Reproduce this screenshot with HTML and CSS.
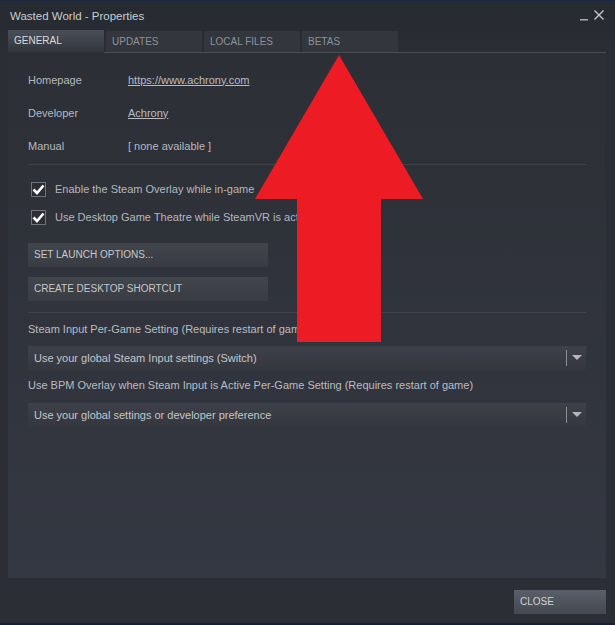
FILE: index.html
```html
<!DOCTYPE html>
<html lang="en">
<head>
  <meta charset="UTF-8" />
  <meta name="viewport" content="width=device-width, initial-scale=1.0"/>
  <title>Wasted World - Properties</title>
  <link rel="stylesheet" href="styles.css">
</head>
<body>

<div class="window">
  <div class="titlebar">
    <span class="title">Wasted World - Properties</span>
    <div class="controls">
      <svg class="ctl" width="10" height="12" viewBox="0 0 10 12"><rect x="1" y="10" width="8" height="1.5" fill="#a9adb3"/></svg>
      <svg class="ctl" width="12" height="12" viewBox="0 0 12 12"><path d="M1.5 1.5 L10.5 10.5 M10.5 1.5 L1.5 10.5" stroke="#c4c7cb" stroke-width="1.4"/></svg>
    </div>
  </div>

  <div class="tabs">
    <div class="tab active">GENERAL</div>
    <div class="tab-rest">
      <div class="tab">UPDATES</div>
      <div class="tab">LOCAL FILES</div>
      <div class="tab">BETAS</div>
    </div>
  </div>

  <div class="panel">
    <div class="info-row"><span class="info-label">Homepage</span><a class="info-link">https://www.achrony.com</a></div>
    <div class="info-row"><span class="info-label">Developer</span><a class="info-link">Achrony</a></div>
    <div class="info-row"><span class="info-label">Manual</span><span>[ none available ]</span></div>

    <div class="sep first"></div>

    <label class="check-row"><span class="box"><svg width="13" height="11" viewBox="0 0 13 11"><path d="M1.5 5.5 L5 9 L11.5 1.5" stroke="#fff" stroke-width="2.6" fill="none"/></svg></span>Enable the Steam Overlay while in-game</label>
    <label class="check-row"><span class="box"><svg width="13" height="11" viewBox="0 0 13 11"><path d="M1.5 5.5 L5 9 L11.5 1.5" stroke="#fff" stroke-width="2.6" fill="none"/></svg></span>Use Desktop Game Theatre while SteamVR is active</label>

    <div class="btn launch">SET LAUNCH OPTIONS...</div>
    <div class="btn shortcut">CREATE DESKTOP SHORTCUT</div>

    <div class="sep second"></div>

    <div class="setting-label">Steam Input Per-Game Setting (Requires restart of game)</div>
    <div class="dropdown">
      <span>Use your global Steam Input settings (Switch)</span>
      <span class="dd-arrow"><svg width="10" height="6" viewBox="0 0 10 6"><path d="M0 0 H10 L5 5 Z" fill="#b3b6bb"/></svg></span>
    </div>
    <div class="setting-label second-label">Use BPM Overlay when Steam Input is Active Per-Game Setting (Requires restart of game)</div>
    <div class="dropdown second-dd">
      <span>Use your global settings or developer preference</span>
      <span class="dd-arrow"><svg width="10" height="6" viewBox="0 0 10 6"><path d="M0 0 H10 L5 5 Z" fill="#b3b6bb"/></svg></span>
    </div>
  </div>

  <div class="footer">
    <div class="btn close">CLOSE</div>
  </div>

  <!-- big red pointer over the tab row -->
  <svg class="pointer" width="168" height="287" viewBox="0 0 168 287">
    <polygon points="84,0 168,144 126,144 126,287 42,287 42,144 0,144" fill="#ed1c24"/>
  </svg>
</div>

</body>
</html>
```

FILE: styles.css
```css
* {
  margin: 0;
  padding: 0;
  box-sizing: border-box;
}
body {
  font-family: Arial, 'Liberation Sans', sans-serif;
  font-size: 11px;
  color: #b5b9bf;
  background: #2a2d33;
  overflow: hidden;
}

.window {
  position: relative;
  width: 615px;
  height: 625px;
  display: flex;
  flex-direction: column;
  background: linear-gradient(#262a31, #2b2e34 60px);
  border-top: 1px solid #1a2640;
  border-bottom: 2px solid #15203a;
}

.titlebar {
  height: 29px;
  display: flex;
  align-items: center;
  justify-content: space-between;
  padding: 0 10px 0 10px;
}
.title {
  font-size: 11.5px;
  color: #c9ccd0;
}
.controls {
  display: flex;
  gap: 4px;
  align-items: center;
  margin-top: -1px;
}

.tabs {
  display: flex;
  align-items: flex-end;
  height: 23px;
  padding-left: 8px;
  margin-right: 9px;
}
.tab {
  width: 96px;
  height: 22px;
  line-height: 22px;
  padding-left: 6px;
  font-size: 10px;
  color: #8d9299;
  background: #33363d;
}
.tab.active {
  height: 23px;
  line-height: 21px;
  color: #d8dadd;
  background: linear-gradient(#4b5058, #30343a);
}
.tab-rest {
  flex: 1;
  display: flex;
  gap: 2px;
  padding-left: 2px;
  border-bottom: 1px solid #4a4e55;
}
.tab-rest .tab {
  height: 21px;
  line-height: 21px;
}

.panel {
  flex: 1;
  margin: 0 9px 0 8px;
  padding: 10px 20px 0 20px;
  background: linear-gradient(#2c2f35, #343842);
}

.info-row {
  display: flex;
  height: 33px;
  align-items: center;
}
.info-label {
  width: 100px;
}
.info-link {
  color: #b9bdc3;
  text-decoration: underline;
}

.sep {
  height: 1px;
  background: #3f434a;
}
.sep.first {
  margin-top: 2px;
}
.sep.second {
  margin-top: 11px;
}

.check-row {
  display: flex;
  align-items: center;
  height: 28px;
  color: #b3b8be;
}
.check-row:first-of-type {
  margin-top: 10px;
}
.box {
  width: 15px;
  height: 15px;
  margin: 0 9px 0 3px;
  border: 1px solid #6f737a;
  background: #2b2e34;
  display: flex;
  align-items: center;
  justify-content: center;
}

.btn {
  height: 24px;
  line-height: 24px;
  padding-left: 6px;
  font-size: 10px;
  color: #c5c8cc;
  background: linear-gradient(#41454c, #393c43);
}
.launch,
.shortcut {
  width: 240px;
}
.launch {
  margin-top: 12px;
}
.shortcut {
  margin-top: 10px;
}

.setting-label {
  height: 20px;
  line-height: 20px;
  margin-top: 6px;
  color: #b9bdc2;
}
.second-label {
  margin-top: 5px;
}

.dropdown {
  height: 24px;
  display: flex;
  align-items: center;
  justify-content: space-between;
  padding-left: 6px;
  margin-top: 7px;
  color: #c3c6ca;
  background: linear-gradient(#3e4149, #34373e);
}
.second-dd {
  margin-top: 8px;
}
.dd-arrow {
  height: 16px;
  width: 20px;
  border-left: 1px solid #8b8f95;
  display: flex;
  align-items: center;
  justify-content: center;
}

.footer {
  height: 45px;
  display: flex;
  justify-content: flex-end;
  padding: 12px 9px 0 0;
}
.btn.close {
  width: 92px;
  color: #d0d3d7;
  background: linear-gradient(#5a5f69, #444851);
}

.pointer {
  position: absolute;
  left: 255px;
  top: 54px;
}
```
